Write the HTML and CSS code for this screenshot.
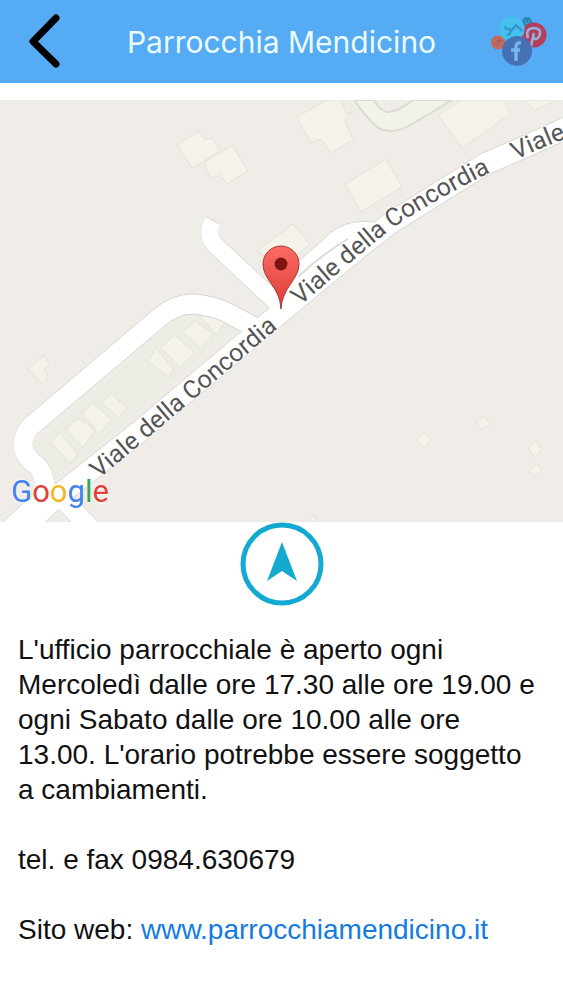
FILE: index.html
```html
<!DOCTYPE html>
<html lang="it">
<head>
<meta charset="utf-8">
<meta name="viewport" content="width=device-width, initial-scale=1">
<title>Parrocchia Mendicino</title>
<link rel="stylesheet" href="styles.css">
</head>
<body>
<header class="topbar">
  <button class="icon-button" type="button" aria-label="Indietro">
    <svg width="36" height="56" viewBox="26 12 36 56" aria-hidden="true"><path class="chevron" d="M56 16 33 39.500 56 62"/></svg>
  </button>
  <h1 class="title">Parrocchia Mendicino</h1>
  <button class="icon-button" type="button" aria-label="Social">
    <svg width="58" height="56" viewBox="490 13 58 56" aria-hidden="true">
      <circle cx="527" cy="21" r="5" fill="#2b86b8"/>
      <path d="M524 19l3 4 3-4" fill="none" stroke="#4aa5d8"/>
      <circle cx="498" cy="41.500" r="7" fill="#c4695c"/>
      <path d="M494 43q4-5 8-3M497 46l3-8" fill="none" stroke="#a0566a"/>
      <circle cx="534" cy="34" r="12.500" fill="#b83c5c"/>
      <circle cx="512" cy="28" r="12.500" fill="#43c0ee"/>
      <path d="M505 25q1 5 5 3 2 5-3 6M511 30l5-6 6 6" fill="none" stroke="#3591ca" stroke-width="2"/>
      <path d="M531 45l3-13M528 37q-3-9 5-10 8 0 7 6-2 7-7 4" fill="none" stroke="#8fb5df" stroke-width="2.500"/>
      <circle cx="517" cy="50" r="15" fill="#4671b5"/>
      <path d="M521 42q-5-1-5 4v14M511 49h9" fill="none" stroke="#75b5ed" stroke-width="3.500"/>
    </svg>
  </button>
</header>
<main>
  <svg class="map" viewBox="0 100 563 422" role="img" aria-label="Mappa di Viale della Concordia">
    <defs>
      <linearGradient id="pin" x1="0" y1="0" x2="0" y2="1"><stop offset="0" stop-color="#fc6b64"/><stop offset="1" stop-color="#dc3b36"/></linearGradient>
      <path id="label1" d="M99 479 290 318"/>
      <path id="label2" d="M300 306Q348 264 391 229 435 199 505 165"/>
      <path id="label3" d="M516 160Q545 146 590 129"/>
      <g id="roads">
        <path d="M213 221Q206 234 214 244L278 304" stroke-width="17"/>
        <path d="M45 500Q47 476 37 466C22 455 18 443 30 427L160 317Q177 303 195 304 214 306 228 313L260 330" stroke-width="19"/>
        <path d="M281 291 336 242Q350 229 376 233" stroke-width="20"/>
        <path d="M58 494 92 530" stroke-width="19"/>
        <path d="M10 535 60 489" stroke-width="28"/>
        <path d="M45 506 140 431 280 313Q350 254 392 222 432 197 485 164 525 147 575 124" stroke-width="21"/>
      </g>
    </defs>
    <rect class="land" y="100" width="563" height="422"/>
    <path class="garden" d="M36 445 178 319 235 325 84 457 48 480Z"/>
    <g class="buildings">
      <path d="M177 145 199 131 205 140 211 138 220 150 203 162 192 168Z"/>
      <path d="M204 163 232 145 248 171 227 184 220 175 211 179Z"/>
      <path d="M297 117 327 100H341L346 114 353 112 345 120 353 140 330 153 321 139 311 143Z"/>
      <path d="M438 115 462 100H503L510 114 462 148Z"/><path d="M526 100 534 111 556 100Z"/>
      <path d="M345 184 386 159 402 187 361 212Z"/><path d="M257 251 293 224 310 244 283 266Z"/>
      <path d="M28 369 44 355 49 364 44 369 48 377 42 384Z"/>
      <path d="M148 361 156 348 174 370 168 377Z"/><path d="M161 347 175 335 195 353 180 367Z"/>
      <path d="M183 332 195 321 214 334 200 348Z"/><path d="M201 318 208 308 225 322 217 335Z"/>
      <path d="M51 443 59 433 78 454 70 463Z"/><path d="M66 429 78 418 95 430 83 448Z"/>
      <path d="M82 413 93 403 111 420 99 434Z"/><path d="M102 403 111 394 127 408 119 418Z"/>
      <path d="M417 440 424 433 431 439 424 448Z"/><path d="M476 422 484 416 490 424 482 429Z"/>
      <path d="M528 449 536 441 542 449 535 457Z"/><path d="M529 470 537 464 542 470 535 477Z"/><path d="M308 521 313 515 318 521Z"/>
    </g>
    <path class="lane" d="M354 100Q370 122 378 128 393 136 414 123L452 100H413Q397 113 387 112 379 110 374 100Z"/>
    <use href="#roads" class="road-edge"/>
    <path class="median" d="M298 277Q322 254 348 239"/>
    <g class="street">
      <text><textPath href="#label1">Viale della Concordia</textPath></text>
      <text><textPath href="#label2">Viale della Concordia</textPath></text>
      <text><textPath href="#label3">Viale</textPath></text>
    </g>
    <path d="M281 309C280 287 263 280 263 264A18 18 0 0 1 299 264C299 280 282 287 281 309Z" fill="url(#pin)" stroke="#a33a36"/>
    <circle cx="281" cy="264" r="6.500" fill="#7e160d"/>
    <text class="logo" x="11" y="502"><tspan class="blue">G</tspan><tspan class="red">o</tspan><tspan class="yellow">o</tspan><tspan class="blue">g</tspan><tspan class="green">l</tspan><tspan class="red">e</tspan></text>
  </svg>
  <button class="navigate" type="button" aria-label="Avvia navigazione">
    <svg width="84" height="84" viewBox="0 0 84 84" aria-hidden="true"><circle cx="42" cy="42" r="39" fill="#fff" stroke="#13aad1" stroke-width="5"/><path d="M42 20 57 59 42 49 27 59Z" fill="#13aad1"/></svg>
  </button>
  <section class="info">
    <p>L'ufficio parrocchiale è aperto ogni Mercoledì dalle ore 17.30 alle ore 19.00 e ogni Sabato dalle ore 10.00 alle ore 13.00. L'orario potrebbe essere soggetto a cambiamenti.</p>
    <p>tel. e fax 0984.630679</p>
    <p>Sito web: <a class="link" href="http://www.parrocchiamendicino.it">www.parrocchiamendicino.it</a></p>
  </section>
</main>
</body>
</html>
```
FILE: styles.css
```css
* { box-sizing: border-box; }
body { margin: 0; background: #fff; color: #111; font-family: "Liberation Sans", Arial, sans-serif; }
.topbar { display: grid; grid-template-columns: 64px 1fr 64px; align-items: center; height: 83px; padding: 0 12px; background: #55abf4; }
.icon-button { display: flex; justify-content: center; padding: 0; border: 0; background: none; }
.chevron { fill: none; stroke: #000; stroke-width: 7; stroke-linecap: round; stroke-linejoin: round; }
.title { margin: 0; color: #ebfbff; font: 400 30px/40px Inter, sans-serif; text-align: center; white-space: nowrap; }
.map { display: block; width: 100%; margin-top: 17px; }
.land { fill: #f0ede8; }
.garden { fill: #ecece5; }
.buildings { fill: #f4f2e9; stroke: #e4e2dc; }
.lane { fill: #f3f2e9; stroke: #dcdbd3; stroke-width: 2; }
.road-edge { fill: none; stroke: #fff; filter: drop-shadow(0 1px 0 #d6d5d0) drop-shadow(0 -1px 0 #d6d5d0); }
.median { fill: none; stroke: #dddcd8; stroke-width: 2; }
.street { fill: #555; stroke: #fff; stroke-width: 2px; paint-order: stroke; font: 400 25px Roboto, sans-serif; }
.logo { font: 400 31px Roboto, sans-serif; stroke: #fff; stroke-width: 1px; paint-order: stroke; }
.blue { fill: #4682e8; }
.red { fill: #df4038; }
.yellow { fill: #efb91b; }
.green { fill: #36a453; }
.navigate { display: block; width: 84px; margin: 0 auto; padding: 0; border: 0; background: none; }
.navigate svg { display: block; }
.info { padding: 26px 20px 26px 18px; font-size: 28px; line-height: 35px; }
.info p { margin: 0 0 35px; }
.link { color: #147be0; text-decoration: none; }
```
